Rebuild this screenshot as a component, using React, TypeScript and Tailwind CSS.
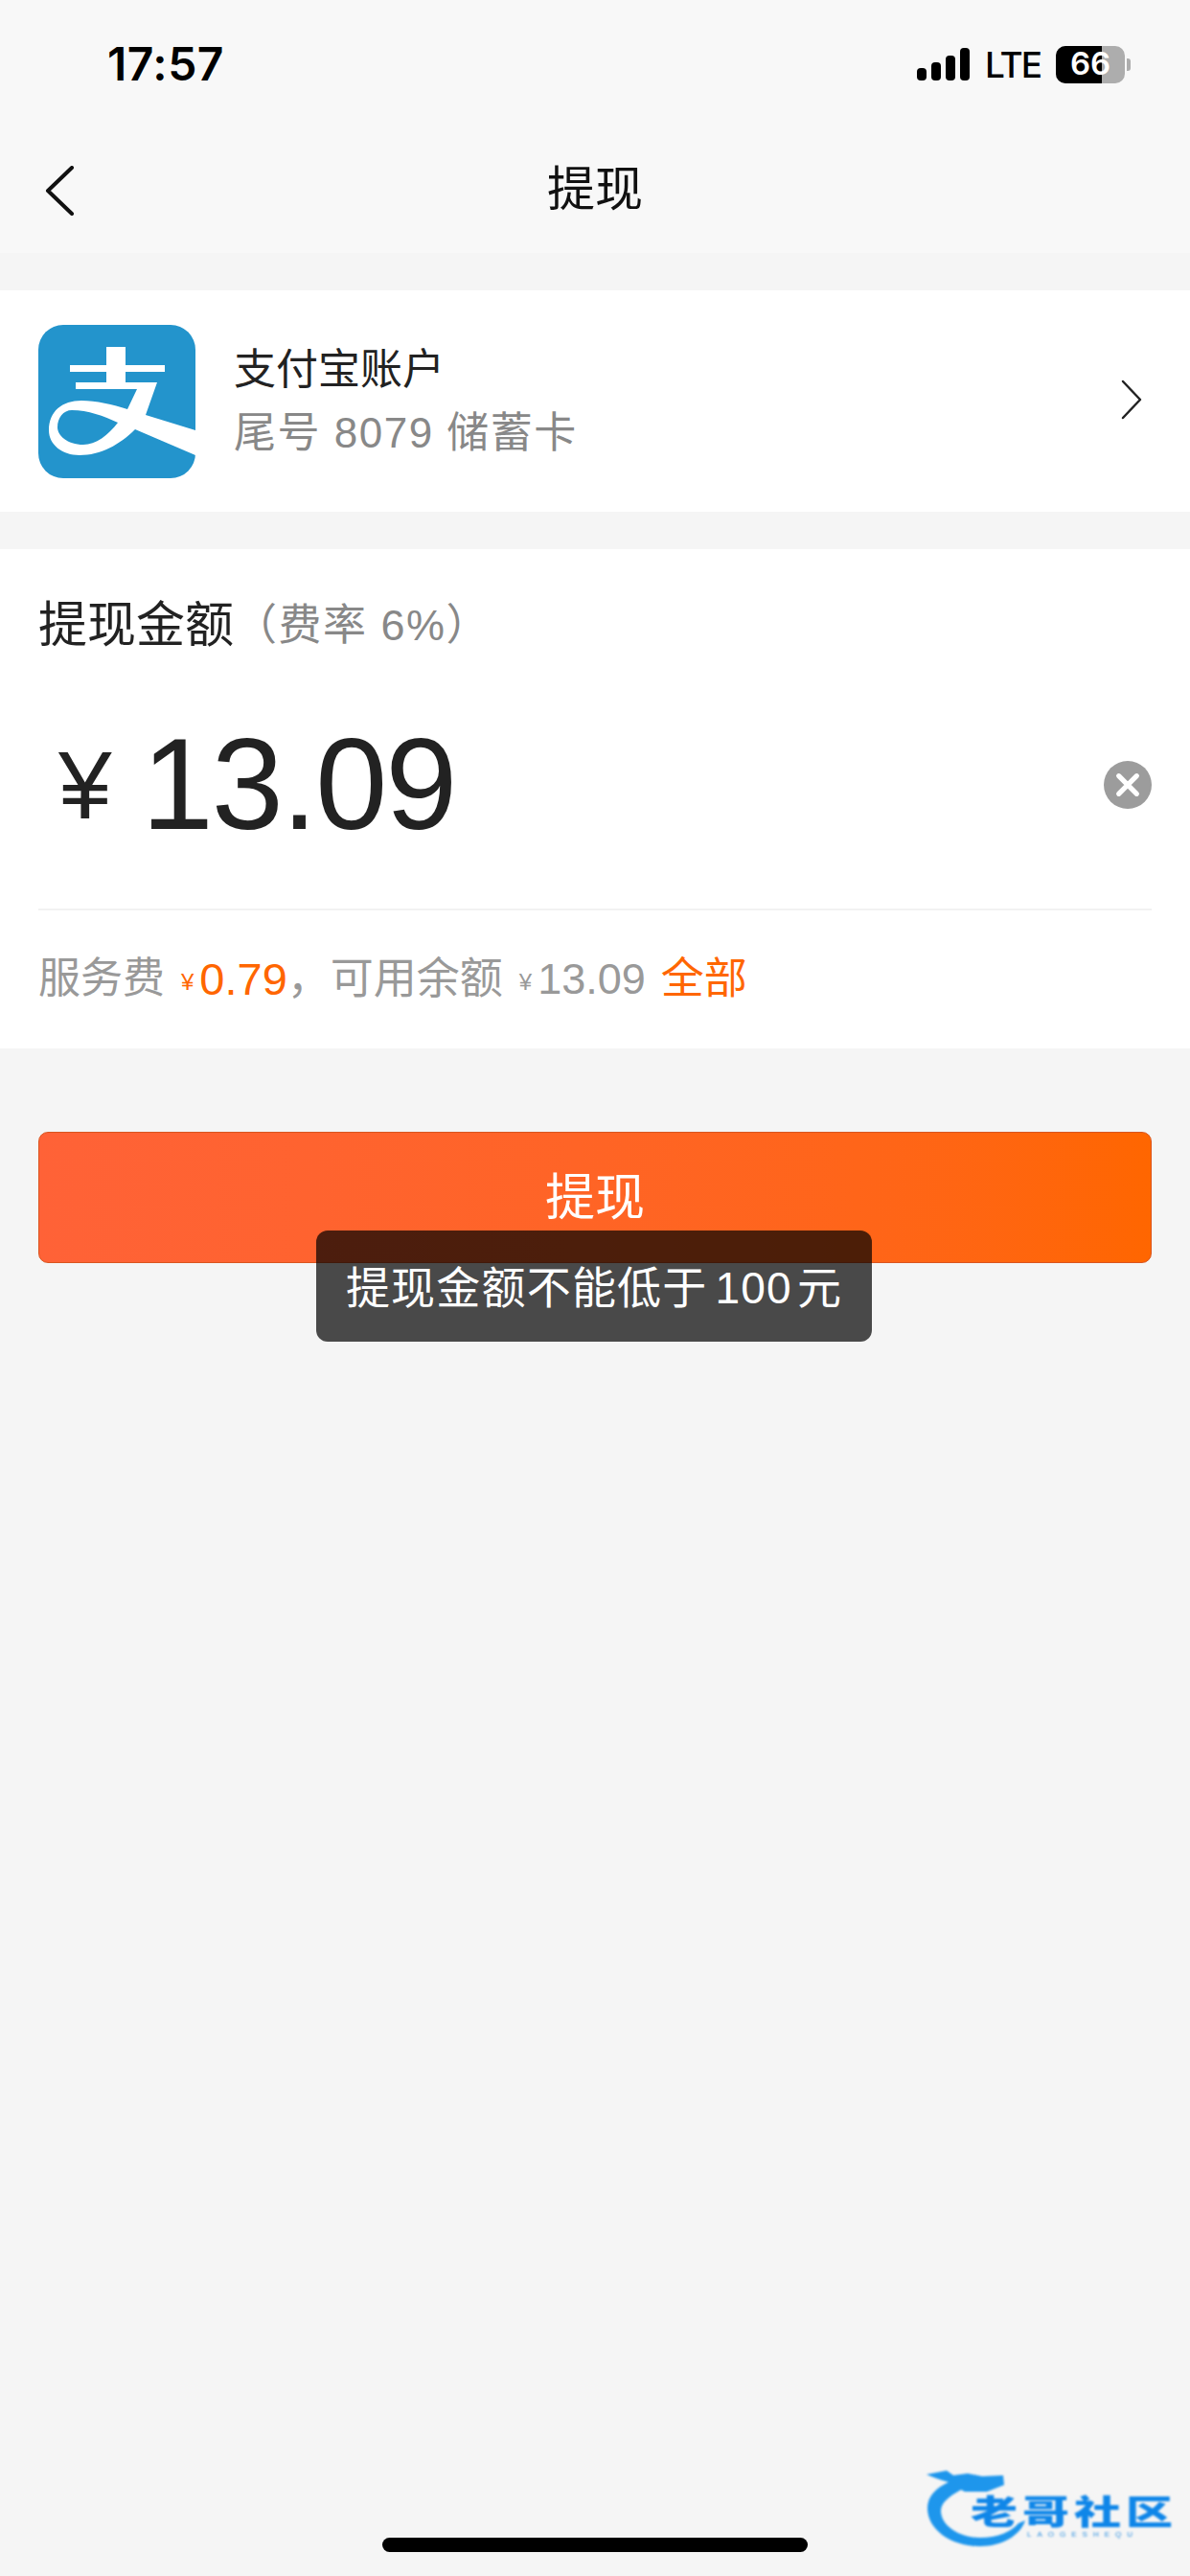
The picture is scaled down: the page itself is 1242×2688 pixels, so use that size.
const CJK = "font-['Liberation_Sans','Noto_Sans_CJK_SC',sans-serif]";

function SignalBars() {
  const bars = ["h-[13px]", "h-[19px]", "h-[26px]", "h-[34px]"];
  return (
    <div className="flex items-end gap-[5px]">
      {bars.map((h) => (
        <div key={h} className={`w-[10px] rounded-[4px] bg-black ${h}`} />
      ))}
    </div>
  );
}

function Battery() {
  return (
    <div className="flex items-center gap-[2px]">
      <div className="relative h-[39px] w-[72px] overflow-hidden rounded-[10px] bg-[#adadad]">
        <div className="h-full w-[48px] bg-black" />
        <span className="absolute inset-0 flex items-center justify-center font-['Inter',sans-serif] text-[33px] font-semibold text-white">
          66
        </span>
      </div>
      <div className="h-[13px] w-[4px] rounded-r-[3px] bg-[#adadad]" />
    </div>
  );
}

function AlipayLogo() {
  return (
    <svg viewBox="0 0 164 160" className="h-[160px] w-[164px]">
      <rect width="164" height="160" rx="26" fill="#2394cc" />
      <path
        fillRule="evenodd"
        fill="#fff"
        d="M71 23h20v19h41v7H91v11h33L112 94l52 16v26l-63-27c-16 16-36 27-58 27-18 0-32-11-32-26 0-20 14-31 34-31 15 0 33 4 48 9l10-21H39v-7h32V49H33v-7h38zM20 107c0 8 10 18 27 18 13 0 26-10 36-23-15-7-31-13-48-13-9 0-15 8-15 18z"
      />
    </svg>
  );
}

function Watermark() {
  return (
    <div className="absolute left-[965px] top-[2570px] h-[90px] w-[262px] blur-[0.8px]">
      <svg viewBox="0 0 262 90" className="absolute inset-0 h-full w-full">
        <path
          fill="#1e96ec"
          d="M2 12l21-4 7 5 15-2 15 3 22-1 1 10-18 7H42l-4-2C25 35 17 42 17 50c0 16 20 28 41 28 18 0 32-6 40-15l7-3c-5 16-25 27-47 27C28 87 3 70 3 47c0-12 9-21 22-27C15 17 8 15 2 12z"
        />
      </svg>
      <span className="absolute left-[48px] top-[31px] origin-top scale-y-[0.72] whitespace-nowrap font-['Noto_Sans_CJK_SC',sans-serif] text-[49px] font-black leading-[50px] tracking-[5px] text-[#0f86e8]">
        老哥社区
      </span>
      <span className="absolute left-[107px] top-[71px] whitespace-nowrap font-['Liberation_Sans',sans-serif] text-[8px] leading-[8px] tracking-[6px] text-[#2b8fe0]">
        LAOGESHEQU
      </span>
    </div>
  );
}

export default function App() {
  return (
    <div className={`relative h-[2688px] w-[1242px] overflow-hidden bg-[#f5f5f5] ${CJK}`}>
      {/* status bar + nav */}
      <header className="h-[264px] bg-[#f8f8f8]">
        <div className="flex h-[134px] items-center justify-between pl-[112px] pr-[62px]">
          <span className="font-['Inter',sans-serif] text-[48px] font-semibold tracking-[0.5px] text-black">17:57</span>
          <div className="flex items-center gap-[16px]">
            <SignalBars />
            <span className="font-['Inter',sans-serif] text-[37px] font-medium leading-none tracking-[-2px] text-black">LTE</span>
            <Battery />
          </div>
        </div>
        <div className="relative flex h-[128px] items-center justify-center">
          <svg viewBox="0 0 32 52" className="absolute left-[46px] top-[39px] h-[52px] w-[32px]" fill="none" stroke="#111" strokeWidth="4" strokeLinecap="round" strokeLinejoin="round">
            <path d="M29 2 4 26l25 24" />
          </svg>
          <h1 className="text-[50px] font-normal leading-none text-[#111]">提现</h1>
        </div>
      </header>

      {/* account */}
      <section className="mt-[39px] flex h-[231px] items-center bg-white pl-[40px] pr-[50px]">
        <AlipayLogo />
        <div className="ml-[40px] flex-1">
          <div className="text-[44px] leading-[66px] text-[#222]">支付宝账户</div>
          <div className="text-[44px] leading-[66px] tracking-[1.5px] text-[#888]">尾号 8079 储蓄卡</div>
        </div>
        <svg viewBox="0 0 22 42" className="mb-[3px] h-[42px] w-[22px]" fill="none" stroke="#222" strokeWidth="2.5" strokeLinecap="round" strokeLinejoin="round">
          <path d="M2 2l18 19L2 40" />
        </svg>
      </section>

      {/* amount */}
      <section className="mt-[39px] h-[521px] bg-white px-[40px]">
        <div className="flex h-[154px] items-center pt-[4px]">
          <span className="text-[51px] leading-none text-[#222]">提现金额</span>
          <span className="text-[45px] leading-none tracking-[1.5px] text-[#888]">（费率 6%）</span>
        </div>
        <div className="flex h-[223px] items-center justify-between border-b-2 border-[#f2f2f2] pb-[38px]">
          <div className="flex items-center">
            <span className="ml-[21px] text-[100px] leading-none text-[#222]">¥</span>
            <span className="ml-[31px] text-[135px] leading-none tracking-[-2px] text-[#222]">13.09</span>
          </div>
          <div className="flex h-[50px] w-[50px] items-center justify-center rounded-full bg-[#9c9c9c]">
            <svg viewBox="0 0 24 24" className="h-[28px] w-[28px]" fill="none" stroke="#fff" strokeWidth="4.5" strokeLinecap="round">
              <path d="M4 4l16 16M20 4 4 20" />
            </svg>
          </div>
        </div>
        <div className="flex h-[142px] items-center text-[#999]">
          <span className="text-[44px] leading-none">服务费</span>
          <span className="ml-[17px] mt-[8px] text-[24px] leading-none text-[#ff6600]">¥</span>
          <span className="ml-[6px] text-[47px] leading-none text-[#ff6600]">0.79</span>
          <span className="text-[45px] leading-none">，可用余额</span>
          <span className="ml-[17px] mt-[8px] text-[24px] leading-none">¥</span>
          <span className="ml-[6px] text-[45px] leading-none">13.09</span>
          <span className="ml-[16px] text-[45px] leading-none text-[#ff6600]">全部</span>
        </div>
      </section>

      {/* submit */}
      <div className="mt-[87px] px-[40px]">
        <button className="flex h-[137px] w-full items-center justify-center rounded-[10px] border border-[#d9551f] bg-gradient-to-r from-[#ff6237] to-[#ff6600] text-[52px] leading-none text-white">
          提现
        </button>
      </div>

      {/* toast */}
      <div className="absolute left-[330px] top-[1284px] flex h-[116px] w-[580px] items-center justify-center rounded-[12px] bg-black/70 pt-[4px] text-[46px] leading-none tracking-[1.2px] text-white">
        提现金额不能低于<span className="ml-[8px]">100</span><span className="ml-[5px]">元</span>
      </div>

      <Watermark />
      <div className="absolute left-[399px] top-[2648px] h-[15px] w-[444px] rounded-full bg-black" />
    </div>
  );
}
